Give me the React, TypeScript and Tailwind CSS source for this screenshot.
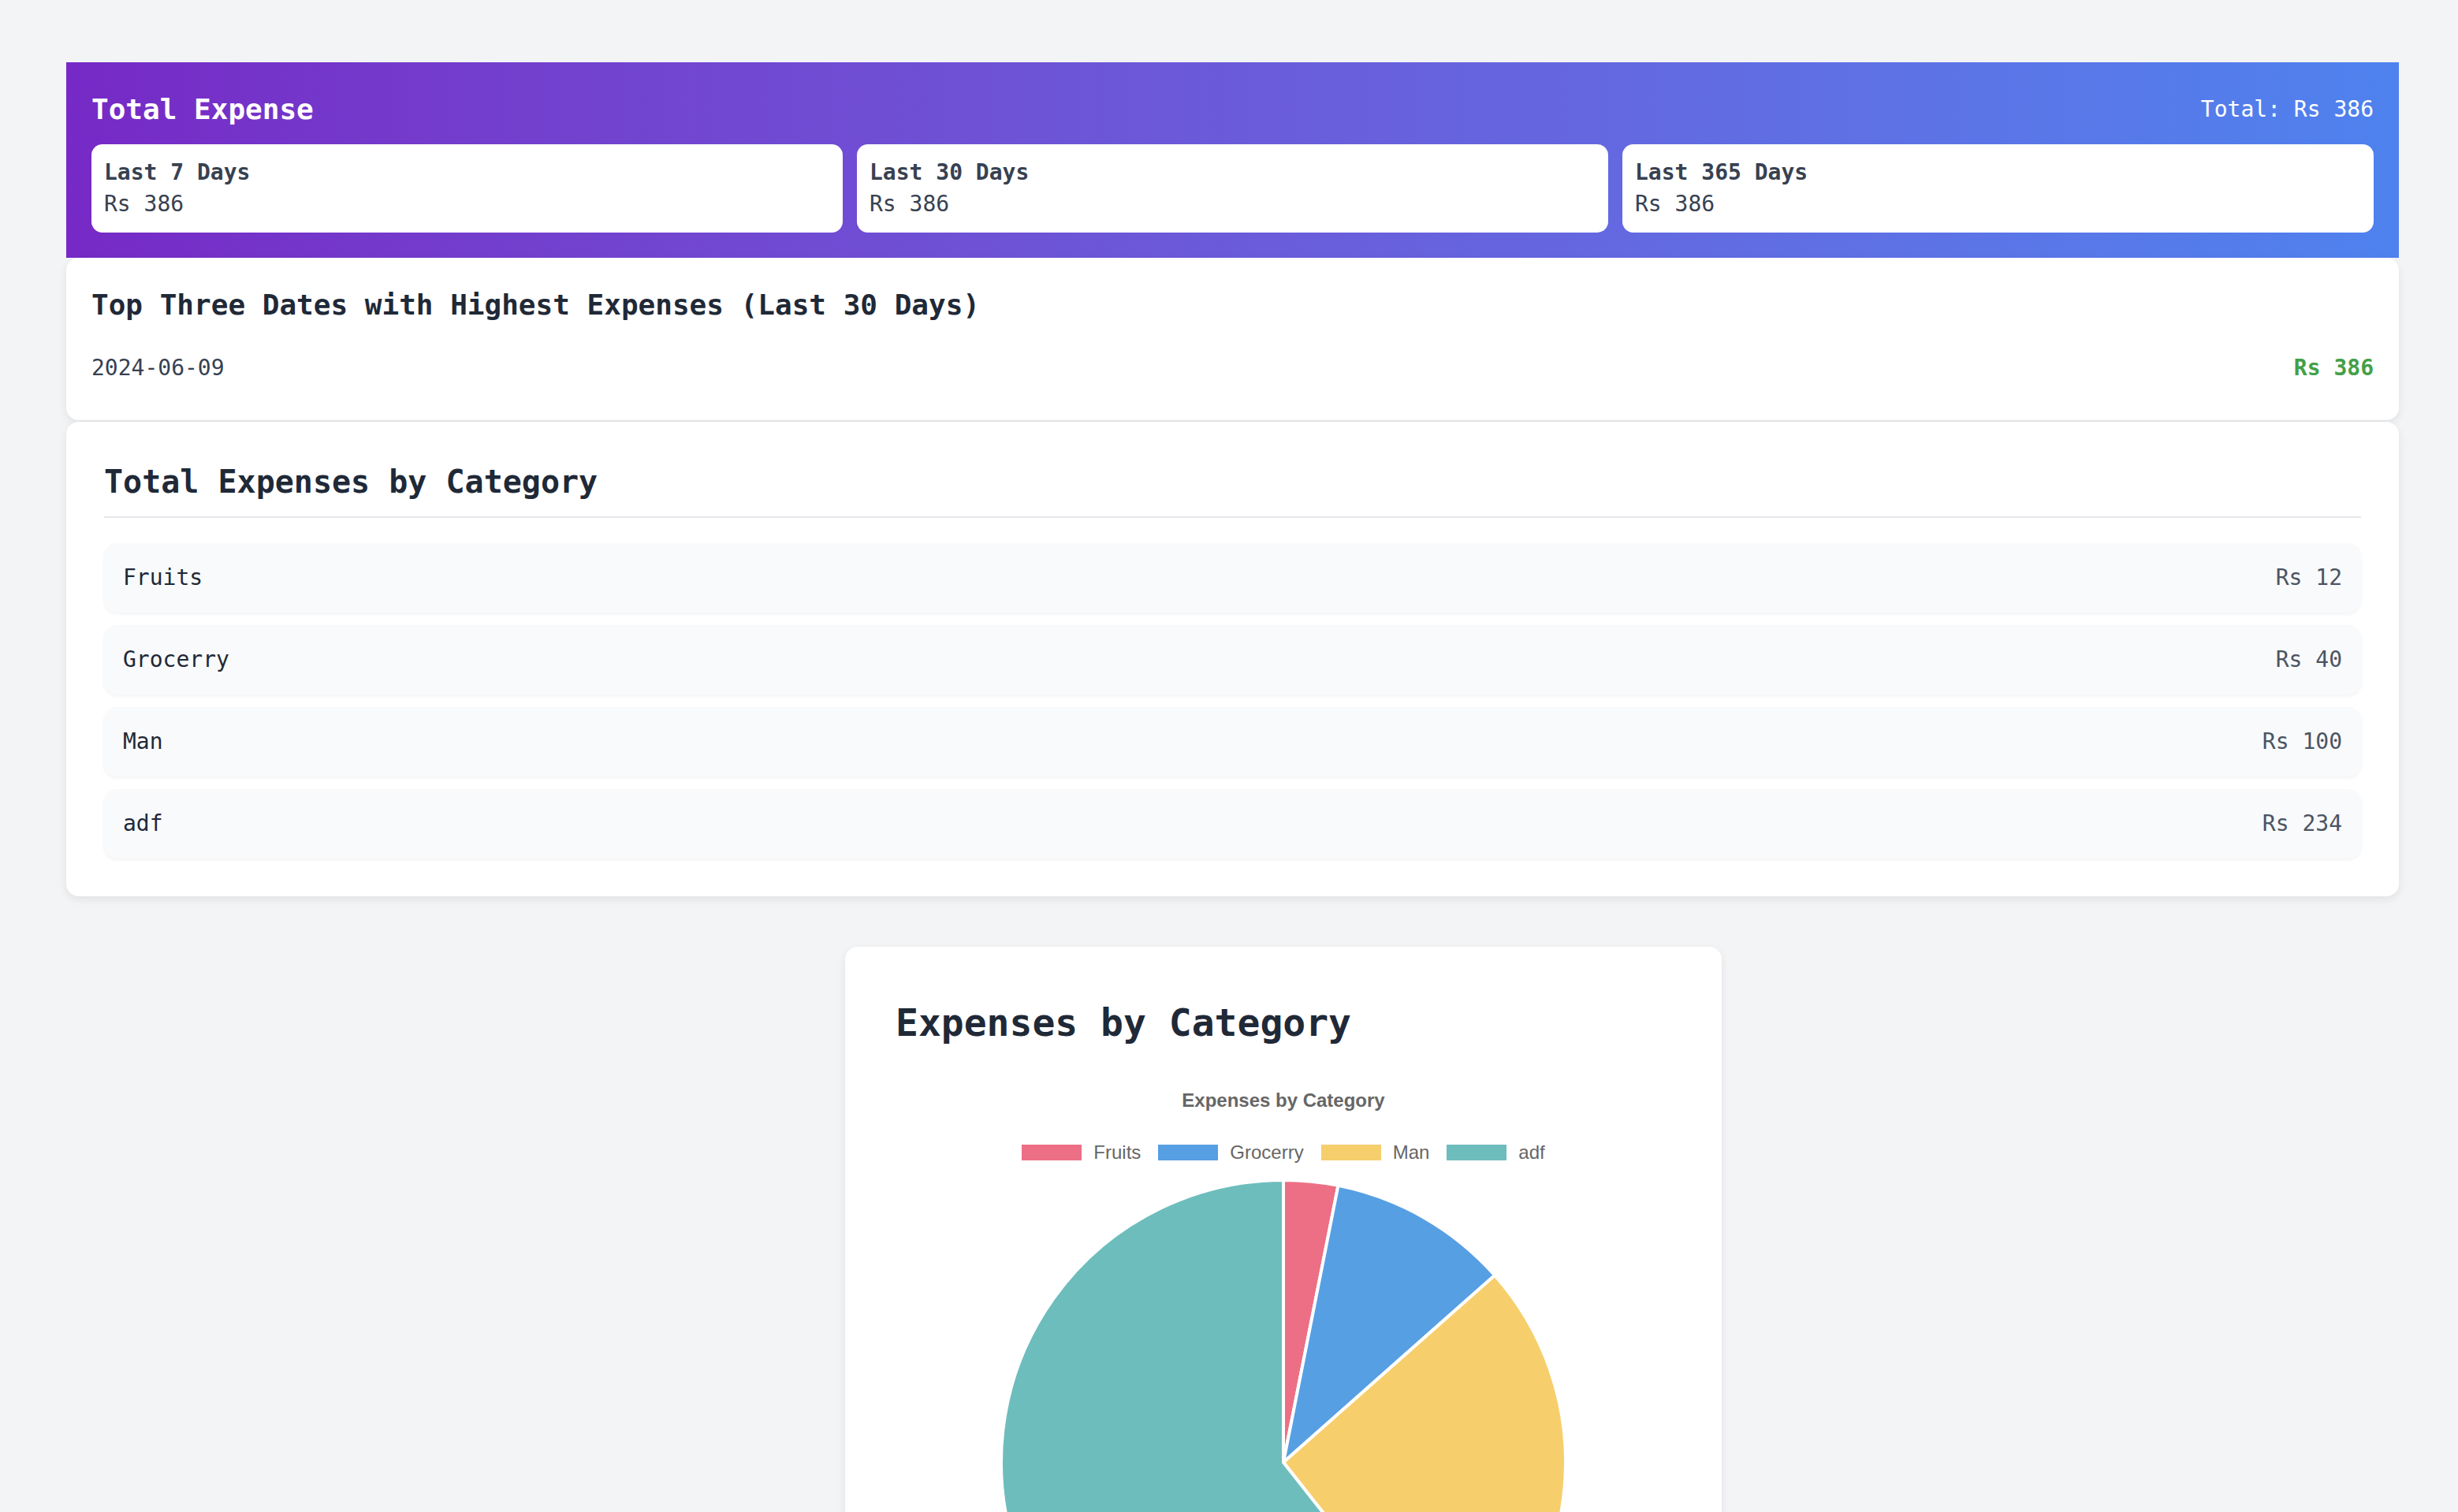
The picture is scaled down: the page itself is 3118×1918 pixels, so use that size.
import React from 'react';

const periods = [
  { label: 'Last 7 Days', amount: 386 },
  { label: 'Last 30 Days', amount: 386 },
  { label: 'Last 365 Days', amount: 386 },
];

const categories = [
  { name: 'Fruits', total: 12, color: '#ed6f85' },
  { name: 'Grocerry', total: 40, color: '#579fe3' },
  { name: 'Man', total: 100, color: '#f6cf6c' },
  { name: 'adf', total: 234, color: '#6ebdbd' },
];

const mono = "font-['DejaVu_Sans_Mono','Liberation_Mono',monospace]";

function PieChart() {
  const cx = 360;
  const cy = 360;
  const r = 358;
  const sum = categories.reduce((s, c) => s + c.total, 0);
  let angle = -Math.PI / 2;

  const slices = categories.map((c) => {
    const start = angle;
    const sweep = (c.total / sum) * Math.PI * 2;
    angle += sweep;
    const x1 = cx + r * Math.cos(start);
    const y1 = cy + r * Math.sin(start);
    const x2 = cx + r * Math.cos(angle);
    const y2 = cy + r * Math.sin(angle);
    const large = sweep > Math.PI ? 1 : 0;
    const d = `M ${cx} ${cy} L ${x1} ${y1} A ${r} ${r} 0 ${large} 1 ${x2} ${y2} Z`;
    return <path key={c.name} d={d} fill={c.color} stroke="#ffffff" strokeWidth={4} strokeLinejoin="round" />;
  });

  return (
    <svg width="720" height="720" viewBox="0 0 720 720">
      {slices}
    </svg>
  );
}

export default function App() {
  return (
    <div className={`h-screen overflow-hidden bg-[#f3f4f6] pt-[79px] pl-[84px] ${mono}`}>
      <div className="w-[2959px]">
        {/* Header */}
        <div className="bg-gradient-to-r from-[#7629c6] to-[#4e82ee] px-[32px] pt-[32px] pb-[32px]">
          <div className="flex items-center justify-between mb-[16px]">
            <h1 className="text-[36px] leading-[56px] font-bold text-white">Total Expense</h1>
            <span className="text-[28px] leading-[40px] text-white">Total: Rs 386</span>
          </div>
          <div className="grid grid-cols-3 gap-[18px]">
            {periods.map((p) => (
              <div key={p.label} className="bg-white rounded-[14px] px-[16px] py-[16px] text-[#374151]">
                <div className="text-[28px] leading-[40px] font-bold">{p.label}</div>
                <div className="text-[28px] leading-[40px]">Rs {p.amount}</div>
              </div>
            ))}
          </div>
        </div>

        {/* Top dates */}
        <div className="bg-white rounded-[16px] shadow-[0_4px_12px_rgba(0,0,0,0.08)] px-[32px] pt-[32px] pb-[30px]">
          <h2 className="text-[36px] leading-[56px] font-bold text-[#1f2937] mb-[16px]">
            Top Three Dates with Highest Expenses (Last 30 Days)
          </h2>
          <div className="flex items-center justify-between py-[16px]">
            <span className="text-[28px] leading-[40px] text-[#374151]">2024-06-09</span>
            <span className="text-[28px] leading-[40px] font-bold text-[#43a047]">Rs 386</span>
          </div>
        </div>

        {/* Totals by category */}
        <div className="mt-[2px] bg-white rounded-[16px] shadow-[0_4px_12px_rgba(0,0,0,0.08)] p-[48px]">
          <h2 className="text-[40px] leading-[56px] font-bold text-[#1f2937] pb-[16px] border-b-2 border-[#e5e7eb]">
            Total Expenses by Category
          </h2>
          <ul className="mt-[32px] flex flex-col gap-[16px]">
            {categories.map((c) => (
              <li
                key={c.name}
                className="flex items-center justify-between bg-[#f9fafb] rounded-[16px] p-[24px] shadow-[0_2px_4px_rgba(0,0,0,0.05)]"
              >
                <span className="text-[28px] leading-[40px] text-[#1f2937]">{c.name}</span>
                <span className="text-[28px] leading-[40px] text-[#4b5563]">Rs {c.total}</span>
              </li>
            ))}
          </ul>
        </div>

        {/* Chart card */}
        <div className="mt-[64px] ml-[988px] w-[1112px] bg-white rounded-[16px] shadow-[0_4px_12px_rgba(0,0,0,0.08)] p-[64px] pb-[200px]">
          <h2 className="text-[48px] leading-[64px] font-bold text-[#1f2937]">Expenses by Category</h2>
          <div className="font-['Liberation_Sans',Arial,sans-serif] text-[#666666]">
            <div className="mt-[55px] text-center text-[24px] leading-[24px] font-bold">Expenses by Category</div>
            <div className="mt-[42px] flex items-center justify-center gap-[22px] h-[24px]">
              {categories.map((c) => (
                <div key={c.name} className="flex items-center gap-[15px]">
                  <span className="block w-[76px] h-[20px]" style={{ backgroundColor: c.color }} />
                  <span className="text-[24px] leading-[24px]">{c.name}</span>
                </div>
              ))}
            </div>
            <div className="mt-[21px] flex justify-center">
              <PieChart />
            </div>
          </div>
        </div>
      </div>
    </div>
  );
}
